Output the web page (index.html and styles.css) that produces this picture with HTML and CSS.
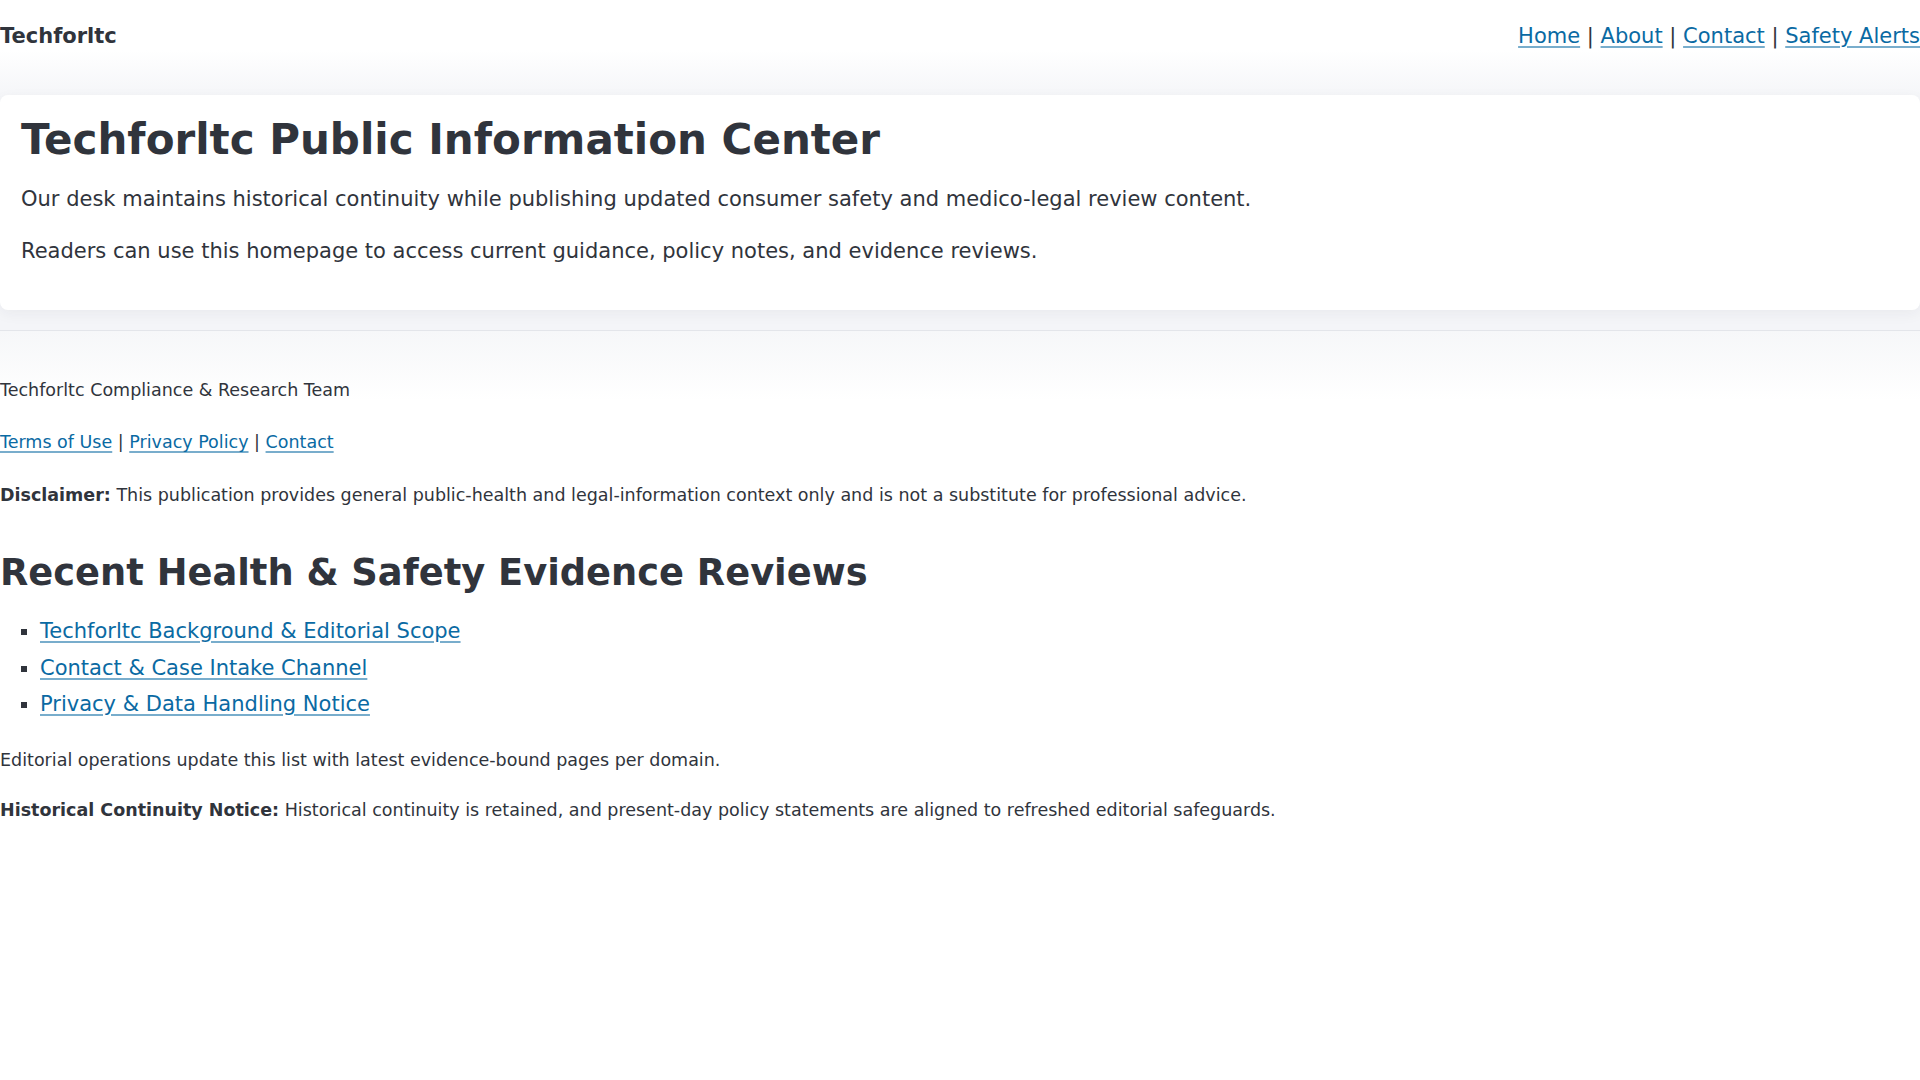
FILE: index.html
```html
<!DOCTYPE html>
<html lang="en">
<head>
	<meta charset="UTF-8">
	<title>Techforltc Public Information Center</title>
	<link rel="stylesheet" href="styles.css">
</head>
<body>
	<div class="top">
		<header class="site-head">
			<div class="brand">Techforltc</div>
			<nav class="nav">
				<a href="#">Home</a> | <a href="#">About</a> | <a href="#">Contact</a> | <a href="#">Safety Alerts</a>
			</nav>
		</header>
		<main class="main">
			<section class="card">
				<h1>Techforltc Public Information Center</h1>
				<p>Our desk maintains historical continuity while publishing updated consumer safety and medico-legal review content.</p>
				<p>Readers can use this homepage to access current guidance, policy notes, and evidence reviews.</p>
			</section>
		</main>
	</div>
	<footer class="foot">
		<p>Techforltc Compliance &amp; Research Team</p>
		<p><a href="#">Terms of Use</a> | <a href="#">Privacy Policy</a> | <a href="#">Contact</a></p>
		<p><strong>Disclaimer:</strong> This publication provides general public-health and legal-information context only and is not a substitute for professional advice.</p>
		<h2>Recent Health &amp; Safety Evidence Reviews</h2>
		<ul class="reviews">
			<li><a href="#">Techforltc Background &amp; Editorial Scope</a></li>
			<li><a href="#">Contact &amp; Case Intake Channel</a></li>
			<li><a href="#">Privacy &amp; Data Handling Notice</a></li>
		</ul>
		<p class="note">Editorial operations update this list with latest evidence-bound pages per domain.</p>
		<p><strong>Historical Continuity Notice:</strong> Historical continuity is retained, and present-day policy statements are aligned to refreshed editorial safeguards.</p>
	</footer>
</body>
</html>
```

FILE: styles.css
```css
body{
	margin: 0;
	font-family: "DejaVu Sans", "Liberation Sans", sans-serif;
	color: #30343c;
	background-color: #fff;
}
a{
	color: #0a6aa3;
	text-decoration-color: rgba(10, 106, 163, 0.55);
	text-decoration-thickness: 2px;
	text-underline-offset: 3px;
}
.top{
	background: linear-gradient(to bottom, #fff 0, #fff 50px, #f4f5f8 100px, #f4f5f8 100%);
}
.site-head{
	display: flex;
	justify-content: space-between;
	align-items: center;
	padding: 21px 0 19px;
	line-height: 31px;
}
.brand{
	font-size: 21px;
	font-weight: bold;
}
.nav{
	font-size: 21px;
}
.main{
	padding: 24px 0 20px;
}
.card{
	background-color: #fff;
	border-radius: 8px;
	padding: 20px 21px 21px;
	box-shadow: 0 4px 14px rgba(30, 40, 60, 0.05);
}
.card h1{
	margin: 0 0 18.5px;
	font-size: 42px;
	line-height: 1.2;
}
.card p{
	margin: 0 0 21px;
	font-size: 21px;
	line-height: 1.5;
}
.foot{
	border-top: 1px solid #e3e5ea;
	padding-top: 46px;
	background: linear-gradient(to bottom, #f6f7f9 0, #fff 70px);
}
.foot p{
	margin: 0 0 25.5px;
	font-size: 17.5px;
	line-height: 27px;
}
.foot h2{
	margin: 42px 0 18px;
	font-size: 36.8px;
	line-height: 1.2;
}
.reviews{
	margin: 0 0 24px;
	padding-left: 40px;
	list-style: square;
	font-size: 21px;
	line-height: 36.5px;
}
.foot .note{
	margin-bottom: 23.5px;
}
```
